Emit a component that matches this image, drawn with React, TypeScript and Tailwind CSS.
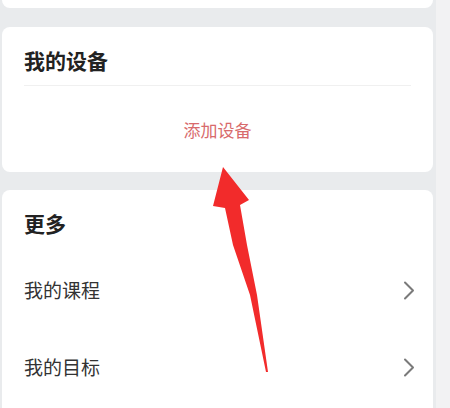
import React from "react";

const font = { fontFamily: '"Noto Sans CJK SC", "Noto Sans", sans-serif' };

function Chevron() {
  return (
    <svg width="12" height="19" viewBox="0 0 12 19" fill="none">
      <path d="M2 1.5 L10 9.5 L2 17.5" stroke="#7a7a7a" strokeWidth="2" strokeLinecap="round" strokeLinejoin="round" />
    </svg>
  );
}

export default function App() {
  return (
    <div className="relative w-[450px] h-[408px] overflow-hidden flex" style={font}>
      <div className="w-[436px] h-full bg-[#e9ebed] pl-[2px] pr-[3px] flex flex-col">
        <div className="h-[8px] bg-white rounded-b-[8px] shrink-0" />
        <div className="mt-[19px] h-[145px] bg-white rounded-[8px] px-[22px] shrink-0 flex flex-col">
          <div className="pt-[19px] h-[47px] text-[21px] leading-[28px] font-bold text-[#222]">我的设备</div>
          <div className="mt-[11px] h-px bg-[#f0f0f0]" />
          <div className="mt-[32px] text-center text-[17px] leading-[24px] text-[#d86a6c]">添加设备</div>
        </div>
        <div className="mt-[18px] flex-1 bg-white rounded-t-[8px] px-[22px] flex flex-col">
          <div className="pt-[19px] h-[47px] text-[21px] leading-[28px] font-bold text-[#222]">更多</div>
          <div className="mt-[15px] h-[77px] flex items-center justify-between">
            <span className="text-[19px] text-[#333]">我的课程</span>
            <span className="mr-[-4px]"><Chevron /></span>
          </div>
          <div className="h-[77px] flex items-center justify-between">
            <span className="text-[19px] text-[#333]">我的目标</span>
            <span className="mr-[-4px]"><Chevron /></span>
          </div>
        </div>
      </div>
      <div className="w-[14px] h-full bg-[#f2f2f3]" />
      <svg className="absolute left-0 top-0 pointer-events-none" width="450" height="408" viewBox="0 0 450 408">
        <polygon
          points="223,167 249,200 240,205 247,245 257,295 268,372 266,372 250,295 233,245 225,208 213,206"
          fill="#f22b2b"
        />
      </svg>
    </div>
  );
}
